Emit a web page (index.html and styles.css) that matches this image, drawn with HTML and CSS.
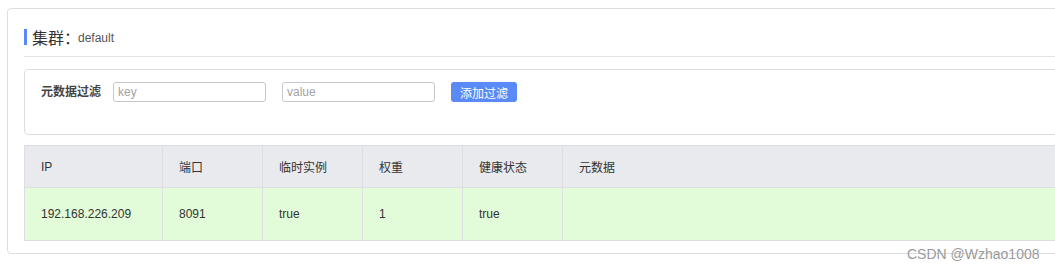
FILE: index.html
```html
<!DOCTYPE html>
<html lang="zh">
<head>
  <meta charset="UTF-8" />
  <meta name="viewport" content="width=device-width, initial-scale=1.0" />
  <title>集群</title>
  <link rel="stylesheet" href="styles.css">
</head>
<body>

  <div class="card">
    <div class="card-title">
      <span class="title-main">集群：</span>
      <span class="title-sub">default</span>
    </div>

    <div class="filter-box">
      <span class="filter-label">元数据过滤</span>
      <input class="filter-input" type="text" placeholder="key" />
      <input class="filter-input" type="text" placeholder="value" />
      <button class="add-button">添加过滤</button>
    </div>

    <table class="instance-table">
      <thead>
        <tr>
          <th class="col-ip">IP</th>
          <th class="col-small">端口</th>
          <th class="col-small">临时实例</th>
          <th class="col-small">权重</th>
          <th class="col-small">健康状态</th>
          <th>元数据</th>
        </tr>
      </thead>
      <tbody>
        <tr>
          <td>192.168.226.209</td>
          <td>8091</td>
          <td>true</td>
          <td>1</td>
          <td>true</td>
          <td></td>
        </tr>
      </tbody>
    </table>
  </div>

  <div class="watermark">CSDN @Wzhao1008</div>

</body>
</html>
```

FILE: styles.css
```css
* {
  margin: 0;
  padding: 0;
  box-sizing: border-box;
}

body {
  font-family: "Liberation Sans", "Noto Sans CJK SC", sans-serif;
  font-size: 12px;
  color: #333;
  background: #fff;
  overflow: hidden;
  height: 270px;
  position: relative;
}

.card {
  margin: 8px 0 0 7px;
  width: 1120px;
  border: 1px solid #dcdee2;
  border-radius: 4px;
  padding: 18px 0 12px 16px;
}

.card-title {
  display: flex;
  align-items: center;
  height: 20px;
  padding-bottom: 9px;
  border-bottom: 1px solid #e3e4e8;
  box-sizing: content-box;
}

.card-title::before {
  content: "";
  display: block;
  width: 3px;
  height: 16px;
  background: #5a8af8;
  margin-right: 5px;
}

.title-main {
  font-size: 16px;
  color: #333;
}

.title-sub {
  font-size: 12px;
  color: #555;
  margin-left: -2px;
  padding-top: 2px;
}

.filter-box {
  margin-top: 12px;
  height: 66px;
  border: 1px solid #dcdee2;
  border-radius: 4px;
  padding: 12px 16px 0 16px;
  display: flex;
  align-items: flex-start;
}

.filter-label {
  font-weight: bold;
  color: #444;
  line-height: 20px;
  margin-right: 12px;
}

.filter-input {
  width: 153px;
  height: 20px;
  border: 1px solid #c5c8ce;
  border-radius: 3px;
  padding: 0 4px;
  font-family: inherit;
  font-size: 12px;
  color: #333;
  margin-right: 16px;
  outline: none;
}

.filter-input::placeholder {
  color: #a3a3a3;
}

.add-button {
  width: 66px;
  height: 20px;
  border: none;
  border-radius: 3px;
  background: #5a8af8;
  color: #fff;
  font-family: inherit;
  font-size: 12px;
  cursor: pointer;
}

.instance-table {
  margin-top: 10px;
  border-collapse: collapse;
  width: 1110px;
}

.instance-table th,
.instance-table td {
  border: 1px solid #dcdee2;
  text-align: left;
  padding: 0 16px;
  font-weight: normal;
  white-space: nowrap;
}

.instance-table th {
  background: #e9eaee;
  height: 42px;
}

.instance-table td {
  background: #e2fcd9;
  height: 53px;
}

.col-ip {
  width: 138px;
}

.col-small {
  width: 100px;
}

.watermark {
  position: absolute;
  left: 907px;
  top: 246px;
  font-size: 14px;
  color: #9a9a9a;
}
```
